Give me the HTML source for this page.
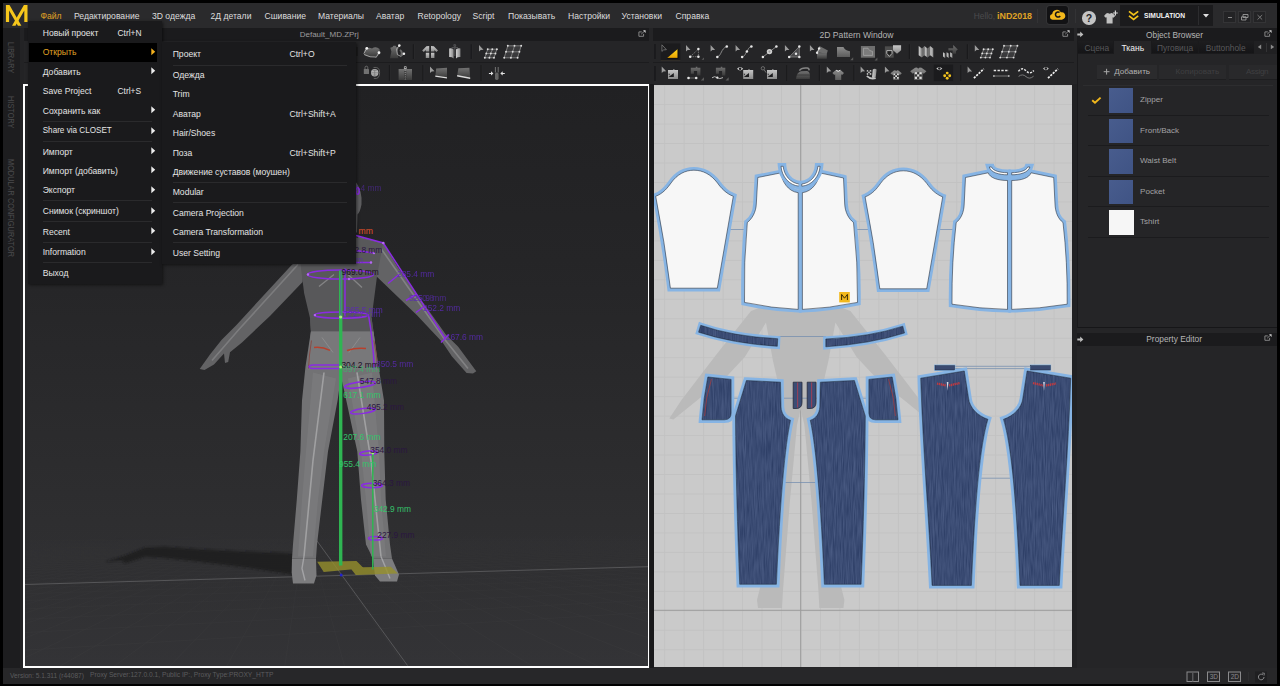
<!DOCTYPE html>
<html lang="ru"><head><meta charset="utf-8"><title>Marvelous Designer</title>
<style>
html,body{margin:0;padding:0;background:#000;}
body{width:1280px;height:686px;overflow:hidden;position:relative;font-family:"Liberation Sans",sans-serif;}
#app{position:absolute;left:0;top:0;width:1280px;height:686px;overflow:hidden;background:#000;}
#app div,#app span,#app svg{position:absolute;}
.t{white-space:nowrap;line-height:12px;height:12px;}
</style></head>
<body><div id="app">
<div style="left:3px;top:3px;width:1274px;height:681px;background:#252527;"></div>
<div style="left:3px;top:3px;width:1274px;height:25px;background:#2a2a2c;"></div>
<div style="left:3px;top:28px;width:17px;height:640px;background:#1d1d1f;"></div>
<div style="left:20px;top:28px;width:4px;height:640px;background:#232325;"></div>
<div style="left:24px;top:28px;width:625px;height:13px;background:#1b1b1d;"></div>
<div style="left:653px;top:28px;width:421px;height:13px;background:#1b1b1d;"></div>
<div style="left:1077px;top:28px;width:200px;height:13px;background:#1b1b1d;"></div>
<div style="left:24px;top:41px;width:625px;height:43px;background:#252527;"></div>
<div style="left:653px;top:41px;width:421px;height:43px;background:#252527;"></div>
<div style="left:24px;top:62px;width:625px;height:1px;background:#1c1c1e;"></div>
<div style="left:653px;top:62px;width:421px;height:1px;background:#1c1c1e;"></div>
<div style="left:649.5px;top:84px;width:4.5px;height:584px;background:#18181a;"></div>
<div style="left:1072px;top:84px;width:5px;height:584px;background:#212123;"></div>
<div style="left:3px;top:668px;width:1274px;height:16px;background:#272729;"></div>
<span class="t" style="left:16.6px;top:41.5px;color:#4a4a4c;font-size:7.3px;transform-origin:0 0;transform:rotate(90deg) scale(1,1.12);letter-spacing:0.05px;">LIBRARY</span>
<span class="t" style="left:16.6px;top:96px;color:#4a4a4c;font-size:7.3px;transform-origin:0 0;transform:rotate(90deg) scale(1,1.12);letter-spacing:0.05px;">HISTORY</span>
<span class="t" style="left:16.6px;top:159px;color:#4a4a4c;font-size:7.3px;transform-origin:0 0;transform:rotate(90deg) scale(1,1.12);letter-spacing:0.05px;">MODULAR CONFIGURATOR</span>
<span class="t " style="left:10px;top:669.6px;color:#5c5c5e;font-size:6.6px;">Version: 5.1.311 (r44087)</span>
<span class="t " style="left:90px;top:669.2px;color:#5c5c5e;font-size:6.68px;">Proxy Server:127.0.0.1, Public IP:, Proxy Type:PROXY_HTTP</span>
<span class="t " style="left:299.7px;top:29.0px;color:#9c9c9e;font-size:8.0px;">Default_MD.ZPrj</span>
<svg style="left:638px;top:30px" width="9" height="8" viewBox="0 0 9 8"><path d="M3.8 1.9 H0.9 V6.3 H5.6 V3.9" fill="none" stroke="#8e8e90" stroke-width="0.9"/><path d="M3.2 4.2 L6.6 1" stroke="#8e8e90" stroke-width="0.9"/><path d="M5 0.3 H7.6 V2.9 Z" fill="#d0d0d0"/></svg>
<svg style="left:1062px;top:30px" width="9" height="8" viewBox="0 0 9 8"><path d="M3.8 1.9 H0.9 V6.3 H5.6 V3.9" fill="none" stroke="#8e8e90" stroke-width="0.9"/><path d="M3.2 4.2 L6.6 1" stroke="#8e8e90" stroke-width="0.9"/><path d="M5 0.3 H7.6 V2.9 Z" fill="#d0d0d0"/></svg>
<span class="t " style="left:819.5px;top:29.0px;color:#b4b4b4;font-size:8.6px;">2D Pattern Window</span>
<div style="left:23px;top:84px;width:626.3px;height:583.7px;background:#fff;"></div>
<svg style="left:25px;top:85.5px" width="623.2" height="580.7" viewBox="25 85.5 623.2 580.7">
<defs>
<linearGradient id="bg3" x1="0" y1="0" x2="0" y2="1"><stop offset="0" stop-color="#212123"/><stop offset="0.3" stop-color="#252527"/><stop offset="0.55" stop-color="#2a2a2c"/><stop offset="0.75" stop-color="#2e2e30"/><stop offset="1" stop-color="#323235"/></linearGradient>
<linearGradient id="leg" x1="0" y1="0" x2="1" y2="0"><stop offset="0" stop-color="#8a8a8a"/><stop offset="0.5" stop-color="#6c6c6e"/><stop offset="1" stop-color="#858587"/></linearGradient>
</defs>
<rect x="25" y="85.5" width="623.2" height="580.7" fill="url(#bg3)"/>
<defs><linearGradient id="flr" x1="0" y1="0" x2="0" y2="1"><stop offset="0" stop-color="#2f2f31" stop-opacity="0"/><stop offset="0.35" stop-color="#303032" stop-opacity="0.5"/><stop offset="1" stop-color="#343437" stop-opacity="0.8"/></linearGradient><filter id="blur2" x="-10%" y="-30%" width="120%" height="160%"><feGaussianBlur stdDeviation="1.0"/></filter><linearGradient id="fmg" x1="0" y1="0" x2="0" y2="1"><stop offset="0" stop-color="#000"/><stop offset="0.3" stop-color="#777"/><stop offset="1" stop-color="#fff"/></linearGradient><mask id="flm" maskUnits="userSpaceOnUse" x="25" y="528" width="623" height="140"><rect x="25" y="528" width="623" height="140" fill="url(#fmg)"/></mask></defs>
<rect x="25" y="522" width="623" height="145" fill="url(#flr)"/>
<path d="M206.6 533.9 L-1299.3 670 M209.1 533.9 L-1270.5 670 M211.7 533.8 L-1241.2 670 M214.3 533.7 L-1211.3 670 M216.9 533.6 L-1181.0 670 M219.5 533.6 L-1150.2 670 M222.0 533.5 L-1118.8 670 M224.6 533.4 L-1086.8 670 M227.2 533.3 L-1054.3 670 M229.8 533.3 L-1021.2 670 M232.4 533.2 L-987.6 670 M234.9 533.1 L-953.3 670 M237.5 533.1 L-918.4 670 M240.1 533.0 L-882.8 670 M242.7 532.9 L-846.6 670 M245.3 532.8 L-809.7 670 M247.8 532.8 L-772.1 670 M250.4 532.7 L-733.7 670 M253.0 532.6 L-694.7 670 M255.6 532.5 L-654.8 670 M258.2 532.5 L-614.2 670 M260.7 532.4 L-572.7 670 M263.3 532.3 L-530.5 670 M265.9 532.2 L-487.3 670 M268.5 532.2 L-443.3 670 M271.1 532.1 L-398.4 670 M273.6 532.0 L-352.5 670 M276.2 531.9 L-305.6 670 M278.8 531.9 L-257.8 670 M281.4 531.8 L-208.8 670 M284.0 531.7 L-158.9 670 M286.5 531.7 L-107.8 670 M289.1 531.6 L-55.6 670 M291.7 531.5 L-2.1 670 M294.3 531.4 L52.5 670 M296.9 531.4 L108.4 670 M299.4 531.3 L165.6 670 M302.0 531.2 L224.2 670 M304.6 531.1 L284.2 670 M307.2 531.1 L345.7 670 M309.8 531.0 L408.7 670 M312.3 530.9 L473.2 670 M314.9 530.8 L539.4 670 M317.5 530.8 L607.2 670 M320.1 530.7 L676.9 670 M322.7 530.6 L748.3 670 M325.2 530.5 L821.7 670 M327.8 530.5 L897.0 670 M330.4 530.4 L974.4 670 M333.0 530.3 L1053.9 670 M335.6 530.3 L1135.7 670 M338.1 530.2 L1219.8 670 M340.7 530.1 L1306.4 670 M343.3 530.0 L1395.4 670 M345.9 530.0 L1487.2 670 M348.5 529.9 L1581.7 670 M351.0 529.8 L1679.1 670 M353.6 529.7 L1779.5 670 M356.2 529.7 L1883.1 670 M358.8 529.6 L1990.1 670 M361.4 529.5 L2100.6 670 M363.9 529.4 L2214.7 670 M366.5 529.4 L2332.7 670 M369.1 529.3 L2454.7 670 M371.7 529.2 L2581.0 670 M374.3 529.1 L2711.8 670 M376.8 529.1 L2847.4 670 M379.4 529.0 L2988.0 670 M382.0 528.9 L3133.8 670 M384.6 528.8 L3285.3 670 M387.2 528.8 L3442.6 670 M389.7 528.7 L3606.3 670 M392.3 528.6 L3776.6 670 M394.9 528.6 L3954.0 670 M397.5 528.5 L4138.9 670 M400.1 528.4 L4331.8 670 M402.6 528.3 L4533.2 670 M405.2 528.3 L4743.8 670 M407.8 528.2 L4964.2 670 M410.4 528.1 L5195.0 670 M413.0 528.0 L5437.0 670 M415.5 528.0 L5691.1 670 M418.1 527.9 L5958.1 670 M420.7 527.8 L6239.2 670 M423.3 527.7 L6535.4 670 M425.9 527.7 L6847.9 670 M428.4 527.6 L7178.3 670 M431.0 527.5 L7528.0 670 M433.6 527.4 L7898.8 670 M436.2 527.4 L8292.6 670 M438.8 527.3 L8711.8 670 M441.3 527.2 L9158.7 670 M443.9 527.2 L9636.4 670 M446.5 527.1 L10147.9 670 M449.1 527.0 L10697.1 670 M451.7 526.9 L11288.4 670 M454.2 526.9 L11926.6 670 M456.8 526.8 L12617.7 670 M459.4 526.7 L13368.5 670 M462.0 526.6 L14187.1 670 M20 650.0 L650 611.8 M20 632.3 L650 599.6 M20 619.0 L650 590.3 M20 608.6 L650 583.1 M20 600.3 L650 577.3 M20 593.5 L650 572.6 M20 587.8 L650 568.7 M20 583.0 L650 565.3 M20 578.9 L650 562.5 M20 575.3 L650 560.0 M20 572.2 L650 557.8 M20 569.4 L650 555.9 M20 567.0 L650 554.2 M20 564.8 L650 552.6 M20 562.8 L650 551.3 M20 561.0 L650 550.0 M20 559.4 L650 548.9 M20 557.9 L650 547.8 M20 556.5 L650 546.9 M20 555.2 L650 546.0 M20 554.1 L650 545.2 M20 553.0 L650 544.5 M20 552.0 L650 543.8 M20 551.1 L650 543.1 M20 550.2 L650 542.5 M20 549.4 L650 542.0 M20 548.6 L650 541.4 M20 547.9 L650 540.9 M20 547.3 L650 540.5 M20 546.6 L650 540.0 M20 546.0 L650 539.6 M20 545.5 L650 539.2 M20 544.9 L650 538.8 M20 544.4 L650 538.5 M20 543.9 L650 538.2 M20 543.5 L650 537.8 M20 543.0 L650 537.5 M20 542.6 L650 537.2 M20 542.2 L650 537.0 M20 541.8 L650 536.7 M20 541.5 L650 536.4 M20 541.1 L650 536.2 M20 540.8 L650 536.0 M20 540.5 L650 535.7 M20 540.1 L650 535.5 M20 539.8 L650 535.3 M20 539.6 L650 535.1" stroke="#414143" stroke-width="0.5" fill="none" opacity="0.6" mask="url(#flm)"/>
<path d="M25 584 L648 566.2" stroke="#5a5a5c" stroke-width="0.9" fill="none"/>
<path d="M316 539 L407.5 665" stroke="#5a5a5c" stroke-width="0.9" fill="none"/>
<path d="M105,561.3 L125,555 L145,547 L165,546.3 L200,548.8 L250,551.3 L296,553 L300,574 L290,573.8 L250,567.5 L200,561.3 L165,557.5 L145,556.3 L125,563 L122,560 Z" fill="#1d1d1f" opacity="0.8" filter="url(#blur2)"/>
<ellipse cx="341" cy="208" rx="14" ry="18.5" fill="#626264"/>
<path d="M332,222 L350,222 L352,238 L330,238 Z" fill="#5c5c5e"/>
<path d="M355.5,181 Q362.5,190 361.5,204 Q360,212 357.5,214 L357,232 L355.5,232 Z" fill="#5e5e60"/>
<path d="M305,254 L291.7,264.5 L262.6,296 L236,325 L221.5,339.6 L210,354 L199.7,368.6 L204.5,369.6 L214,364 L224,353 L225,362.6 L228.2,361.5 L230,351.7 L242,342 L270,315.4 L302.6,281.5 Z" fill="#636365"/>
<path d="M298,264 L238,330 L212,360" stroke="#8e8e90" stroke-width="1.6" fill="none" opacity="0.6"/>
<path d="M357.6,236 L383.3,242.5 L397.7,266.6 L445.8,333.9 L458,346 L476.3,370.8 L473,373 L466.6,372.4 L452,356 L442.6,342 L417,314.7 L376.9,276.2 Z" fill="#636365"/>
<path d="M381,248 L444,338 L468,368" stroke="#8e8e90" stroke-width="1.6" fill="none" opacity="0.7"/>
<path d="M330,236 L352,236 L383,243 L377,276 L371.6,317.6 L373.5,331 L310.9,331 L310,317.6 L304.2,293 L301,268 L300,254 Z" fill="#58585a"/>
<path d="M310,317.6 L371.6,317.6 L373.5,331 L310.9,331 Z" fill="#565658"/>
<path d="M319,286 L334,274 M362,287 L348,274" stroke="#8e8e90" stroke-width="1.3" fill="none" opacity="0.8"/>
<path d="M310.9,331 L373.5,331 L378.5,366 L384,400 L384.3,451 L385.7,499 L390,544 L392,558 L373,558 L366,544 L361,499 L357.3,451 L346.3,400 L341,376 L337.6,400 L328,451 L322.3,499 L317,544 L316,558 L292,558 L293,544 L296.8,499 L300.4,451 L302,400 L305.5,366 Z" fill="#727274"/>
<path d="M310.9,331 L373.5,331 L378.2,369 L307,369 Z" fill="#78787a"/>
<path d="M313,372 L336,378 L324,451 L318,499 L313,556 L298,556 L302,499 L306,451 Z M348,378 L372,372 L379,451 L381,499 L386,556 L371,556 L366,499 L361,451 Z" fill="#808082" opacity="0.55"/>
<path d="M324,372 L313,460 L304,556 M357,372 L371,460 L381,556" stroke="#b0b0b2" stroke-width="1.6" fill="none" opacity="0.7"/>
<path d="M341,331 V376 M322,337 L333,352 M360,337 L349,352" stroke="#909092" stroke-width="1" fill="none" opacity="0.8"/>
<path d="M314,347 Q322,346 330,350 M347,350 Q356,347 366,348" stroke="#b8402c" stroke-width="1.4" fill="none"/>
<path d="M311.5,340 Q309,355 308.5,368 M374,340 Q377,355 377.5,368" stroke="#8a3a30" stroke-width="0.7" fill="none"/>
<path d="M292,558 L291.7,572 L293,583 L314,583 L316.5,575 L316,558 Z" fill="#7c7c7e"/>
<path d="M373,558 L375,575 L380,581 L397,581 L399,574 L392,558 Z" fill="#7c7c7e"/>
<path d="M304,556 L302,568 L305,580 M381,556 L386,568 L390,578" stroke="#b4b4b6" stroke-width="1.4" opacity="0.7" fill="none"/>
<path d="M317.2,561.2 L356.5,560.5 L363.8,567.8 L323.7,571.4 Z M350,567 L390.8,566.3 L398,573 L355.8,574.4 Z" fill="#96902c" opacity="0.8"/>
<g fill="none" stroke="#8a2be2" stroke-width="1.5"><ellipse cx="340.5" cy="274" rx="33" ry="4.6"/><ellipse cx="341.2" cy="314.6" rx="27" ry="3.2"/><path d="M339,368 H312 Q306,366.3 312,364.6 H339"/><ellipse cx="360" cy="384.3" rx="15.5" ry="2.8" transform="rotate(-8 360 384.3)"/><ellipse cx="363" cy="410.5" rx="12.5" ry="2.4" transform="rotate(-8 363 410.5)"/><ellipse cx="368.5" cy="452.6" rx="8.8" ry="2" transform="rotate(-5 368.5 452.6)"/><ellipse cx="372" cy="485" rx="10.5" ry="2.2"/><ellipse cx="375.5" cy="537.8" rx="7" ry="1.8"/><ellipse cx="357.6" cy="190.5" rx="1.6" ry="3.2"/><path d="M356,235 L383.3,242.5 L445.8,338.7"/><path d="M356,250 L374,252.5 M356,262 L372,262"/><path d="M388,283 L399,274 M406,300 L416,294 M416,312 L424,306 M441,342 L449,334"/><path d="M345,268 V316"/><path d="M368.7,315.7 Q373,340 374.4,368.9"/></g>
<g fill="#b56af0"><circle cx="383.3" cy="242.5" r="1.3"/><circle cx="374" cy="252.5" r="1.2"/><circle cx="371" cy="262" r="1.2"/><circle cx="308" cy="274" r="1.2"/><circle cx="349" cy="278.5" r="1.2"/><circle cx="315" cy="314.6" r="1.2"/></g>
<path d="M340.7 270 V565" stroke="#2fb552" stroke-width="3.4" fill="none"/>
<path d="M340.7 270 V316" stroke="#6a3fc0" stroke-width="1.4" fill="none" opacity="0.55"/>
<path d="M372.8 452.8 V569" stroke="#2fb552" stroke-width="1.5" fill="none"/>
<g fill="#a8f07a"><circle cx="340.7" cy="316.5" r="1.6"/><circle cx="340.7" cy="366.5" r="1.5"/><circle cx="372.8" cy="452.8" r="1.3"/></g>
<circle cx="341.2" cy="574.4" r="1.5" fill="#2222d0"/>
<text x="358.6" y="234" fill="#e0502a" font-size="8.6" font-family="Liberation Sans, sans-serif" opacity="1">mm</text>
<text x="353.5" y="190.3" fill="#5a2ab4" font-size="8.4" font-family="Liberation Sans, sans-serif" opacity="0.55">3.4 mm</text>
<text x="354.4" y="253" fill="#2a1640" font-size="8.4" font-family="Liberation Sans, sans-serif" opacity="1">2.8 mm</text>
<text x="356" y="262.5" fill="#5a2ab4" font-size="8.4" font-family="Liberation Sans, sans-serif" opacity="0.7">m</text>
<text x="341.6" y="274.6" fill="#1a1024" font-size="8.4" font-family="Liberation Sans, sans-serif" opacity="1">969.0 mm</text>
<text x="397" y="276.6" fill="#5a2ab4" font-size="8.4" font-family="Liberation Sans, sans-serif" opacity="0.85">285.4 mm</text>
<text x="409" y="300.5" fill="#5a2ab4" font-size="8.4" font-family="Liberation Sans, sans-serif" opacity="0.7">525.9 mm</text>
<text x="413" y="300.9" fill="#5a2ab4" font-size="8.4" font-family="Liberation Sans, sans-serif" opacity="0.6">250.8</text>
<text x="423" y="311" fill="#5a2ab4" font-size="8.4" font-family="Liberation Sans, sans-serif" opacity="0.85">252.2 mm</text>
<text x="445.8" y="339.5" fill="#5a2ab4" font-size="8.4" font-family="Liberation Sans, sans-serif" opacity="0.85">167.6 mm</text>
<text x="345.5" y="312.6" fill="#5a2ab4" font-size="8.4" font-family="Liberation Sans, sans-serif" opacity="0.9">365.5 mm</text>
<text x="343" y="316.6" fill="#5a2ab4" font-size="8.4" font-family="Liberation Sans, sans-serif" opacity="0.8">722.7 mm</text>
<text x="341.4" y="367.2" fill="#1a1024" font-size="8.4" font-family="Liberation Sans, sans-serif" opacity="1">304.2 mm</text>
<text x="376" y="367" fill="#5a2ab4" font-size="8.4" font-family="Liberation Sans, sans-serif" opacity="0.85">850.5 mm</text>
<text x="343" y="371.2" fill="#35c26a" font-size="8.4" font-family="Liberation Sans, sans-serif" opacity="0.7">897.4 mm</text>
<text x="359.8" y="383.2" fill="#2a1640" font-size="8.4" font-family="Liberation Sans, sans-serif" opacity="1">547.8 mm</text>
<text x="343.3" y="398" fill="#35c26a" font-size="8.4" font-family="Liberation Sans, sans-serif" opacity="1">617.1 mm</text>
<text x="366.8" y="409.2" fill="#2a1640" font-size="8.4" font-family="Liberation Sans, sans-serif" opacity="1">495.2 mm</text>
<text x="343.3" y="440" fill="#35c26a" font-size="8.4" font-family="Liberation Sans, sans-serif" opacity="1">207.6 mm</text>
<text x="370.3" y="452.2" fill="#2a1640" font-size="8.4" font-family="Liberation Sans, sans-serif" opacity="1">354.0 mm</text>
<text x="339" y="466.2" fill="#35c26a" font-size="8.4" font-family="Liberation Sans, sans-serif" opacity="1">955.4 mm</text>
<text x="372.7" y="485.4" fill="#2a1640" font-size="8.4" font-family="Liberation Sans, sans-serif" opacity="1">364.3 mm</text>
<text x="373.8" y="511.8" fill="#35c26a" font-size="8.4" font-family="Liberation Sans, sans-serif" opacity="1">342.9 mm</text>
<text x="377.3" y="538" fill="#2a1640" font-size="8.4" font-family="Liberation Sans, sans-serif" opacity="1">227.9 mm</text>
</svg>
<svg style="left:654px;top:85px" width="418" height="582" viewBox="654 85 418 582">
<defs>
<filter id="denimf" x="0" y="0" width="100%" height="100%" color-interpolation-filters="sRGB">
<feTurbulence type="fractalNoise" baseFrequency="1.1 0.05" numOctaves="2" seed="7" result="n"/>
<feColorMatrix in="n" type="matrix" values="1 0 0 0 0  1 0 0 0 0  1 0 0 0 0  0 0 0 0 1" result="g"/>
<feComposite in="SourceGraphic" in2="g" operator="arithmetic" k1="0" k2="1" k3="0.16" k4="-0.08" result="c"/>
<feComposite in="c" in2="SourceGraphic" operator="in"/>
</filter>
<pattern id="grid" x="664.2" y="104.1" width="19.47" height="19.47" patternUnits="userSpaceOnUse">
<path d="M0.5 0 V19.47 M0 0.5 H19.47" stroke="#c2c2c2" stroke-width="1" fill="none"/>
</pattern>
</defs>
<rect x="654" y="85" width="418" height="582" fill="#cacaca"/>
<rect x="654" y="85" width="418" height="582" fill="url(#grid)"/>
<path d="M800.7 85 V667 M654 610.3 H1072" stroke="#9c9c9c" stroke-width="1" fill="none"/>
<path d="M785,298 L751,311 L716,355 L681.5,400 L669.3,418.4 L673.4,419.4 L700,398 L722,381.6 L744.8,357 L766,322.4 L773,361 L777.4,380 L771,420 L768,500 L762,580 L757,600 L758,608 L782,608 L783,590 L790,500 L797,425 L800.7,409 L804.4,425 L811.4,500 L818.4,590 L819.4,608 L843.4,608 L844.4,600 L839.4,580 L833.4,500 L830.4,420 L824.0,380 L828.4,361 L835.4,322.4 L856.6,357 L879.4,381.6 L901.4,398 L928.0,419.4 L932.1,418.4 L919.9,400 L885.4,355 L850.4,311 L816.4,298 Z" fill="#bababa"/>
<path d="M726 229.5 H747.5 M853 229.5 H871 M934 229.5 H956.5 M778 336.5 H826 M781 398.2 H820 M731 398.2 H741 M860 398.2 H869 M782 482.5 H820 M975.5 478.2 H1016 M954.6 366.3 H1030.7 M954.6 368.6 H1030.7" stroke="#6f89ad" stroke-width="0.7" fill="none"/>
<path d="M655.7,196.3 C663,193.5 667.5,188 671,183 C677,174.5 685,170.2 693.9,170.2 C703,170.2 711,174.5 717.5,183 C721,188 726,193.5 733.3,196.3 L717.3,288.2 L670.4,288.2 Q664.7,242 655.7,196.3 Z" fill="#86b4e4" stroke="#86b4e4" stroke-width="6.4" stroke-linejoin="miter" stroke-miterlimit="3"/><path d="M655.7,196.3 C663,193.5 667.5,188 671,183 C677,174.5 685,170.2 693.9,170.2 C703,170.2 711,174.5 717.5,183 C721,188 726,193.5 733.3,196.3 L717.3,288.2 L670.4,288.2 Q664.7,242 655.7,196.3 Z" fill="#f7f7f7"/><path d="M655.7,196.3 C663,193.5 667.5,188 671,183 C677,174.5 685,170.2 693.9,170.2 C703,170.2 711,174.5 717.5,183 C721,188 726,193.5 733.3,196.3 L717.3,288.2 L670.4,288.2 Q664.7,242 655.7,196.3 Z" fill="none" stroke="#1c2230" stroke-width="0.55"/>
<g transform="translate(209.4,0.6)"><path d="M655.7,196.3 C663,193.5 667.5,188 671,183 C677,174.5 685,170.2 693.9,170.2 C703,170.2 711,174.5 717.5,183 C721,188 726,193.5 733.3,196.3 L717.3,288.2 L670.4,288.2 Q664.7,242 655.7,196.3 Z" fill="#86b4e4" stroke="#86b4e4" stroke-width="6.4" stroke-linejoin="miter" stroke-miterlimit="3"/><path d="M655.7,196.3 C663,193.5 667.5,188 671,183 C677,174.5 685,170.2 693.9,170.2 C703,170.2 711,174.5 717.5,183 C721,188 726,193.5 733.3,196.3 L717.3,288.2 L670.4,288.2 Q664.7,242 655.7,196.3 Z" fill="#f7f7f7"/><path d="M655.7,196.3 C663,193.5 667.5,188 671,183 C677,174.5 685,170.2 693.9,170.2 C703,170.2 711,174.5 717.5,183 C721,188 726,193.5 733.3,196.3 L717.3,288.2 L670.4,288.2 Q664.7,242 655.7,196.3 Z" fill="none" stroke="#1c2230" stroke-width="0.55"/></g>
<path d="M757.8,177.5 L781.2,172.8 C781.5,181 788,191.5 798.2,192.7 L798.2,309.4 Q772,308.3 744.5,302.4 Q743.6,262 747.3,222.5 C752,219 756,212 756.3,204 Z" fill="#86b4e4" stroke="#86b4e4" stroke-width="6.4" stroke-linejoin="miter" stroke-miterlimit="3"/><path d="M757.8,177.5 L781.2,172.8 C781.5,181 788,191.5 798.2,192.7 L798.2,309.4 Q772,308.3 744.5,302.4 Q743.6,262 747.3,222.5 C752,219 756,212 756.3,204 Z" fill="#f7f7f7"/><path d="M757.8,177.5 L781.2,172.8 C781.5,181 788,191.5 798.2,192.7 L798.2,309.4 Q772,308.3 744.5,302.4 Q743.6,262 747.3,222.5 C752,219 756,212 756.3,204 Z" fill="none" stroke="#1c2230" stroke-width="0.55"/>
<path d="M843.5,178 L819.4,172.8 C819.1,181 812.6,191.5 802.4,192.7 L802.4,309.4 Q829,308.3 857.5,302.4 Q858,262 853.5,222.5 C848.8,219 845,212 844.7,204 Z" fill="#86b4e4" stroke="#86b4e4" stroke-width="6.4" stroke-linejoin="miter" stroke-miterlimit="3"/><path d="M843.5,178 L819.4,172.8 C819.1,181 812.6,191.5 802.4,192.7 L802.4,309.4 Q829,308.3 857.5,302.4 Q858,262 853.5,222.5 C848.8,219 845,212 844.7,204 Z" fill="#f7f7f7"/><path d="M843.5,178 L819.4,172.8 C819.1,181 812.6,191.5 802.4,192.7 L802.4,309.4 Q829,308.3 857.5,302.4 Q858,262 853.5,222.5 C848.8,219 845,212 844.7,204 Z" fill="none" stroke="#1c2230" stroke-width="0.55"/>
<path d="M781.0,166.3 C781.8,176.4 789,185.4 799.3,186.2 L799.3,184.0 C790.4,183.2 783.9,175 783.2,166.3 Z" fill="#86b4e4" stroke="#86b4e4" stroke-width="6.4" stroke-linejoin="miter" stroke-miterlimit="3"/><path d="M781.0,166.3 C781.8,176.4 789,185.4 799.3,186.2 L799.3,184.0 C790.4,183.2 783.9,175 783.2,166.3 Z" fill="#ffffff"/><path d="M781.0,166.3 C781.8,176.4 789,185.4 799.3,186.2 L799.3,184.0 C790.4,183.2 783.9,175 783.2,166.3 Z" fill="none" stroke="#1c2230" stroke-width="0.55"/>
<path d="M 820.1,166.3 C 819.3,176.4 812.1,185.4 801.8,186.2 L 801.8,184.0 C 810.7,183.2 817.2,175 817.9,166.3 Z" fill="#86b4e4" stroke="#86b4e4" stroke-width="6.4" stroke-linejoin="miter" stroke-miterlimit="3"/><path d="M 820.1,166.3 C 819.3,176.4 812.1,185.4 801.8,186.2 L 801.8,184.0 C 810.7,183.2 817.2,175 817.9,166.3 Z" fill="#ffffff"/><path d="M 820.1,166.3 C 819.3,176.4 812.1,185.4 801.8,186.2 L 801.8,184.0 C 810.7,183.2 817.2,175 817.9,166.3 Z" fill="none" stroke="#1c2230" stroke-width="0.55"/>
<rect x="839.2" y="292" width="10.6" height="10.4" fill="#f2b81c"/>
<path d="M841.6 300 V294.4 L844.5 298.2 L847.4 294.4 V300" fill="none" stroke="#3a2c05" stroke-width="1"/>
<path d="M965.5,177.5 L988.2,172.8 C990,178 998,180.5 1007.5,180.5 L1007.5,309.4 Q980,308.8 952,304.2 Q951.6,262 956.2,222.5 C961,219 964,212 964.2,204 Z" fill="#86b4e4" stroke="#86b4e4" stroke-width="6.4" stroke-linejoin="miter" stroke-miterlimit="3"/><path d="M965.5,177.5 L988.2,172.8 C990,178 998,180.5 1007.5,180.5 L1007.5,309.4 Q980,308.8 952,304.2 Q951.6,262 956.2,222.5 C961,219 964,212 964.2,204 Z" fill="#f7f7f7"/><path d="M965.5,177.5 L988.2,172.8 C990,178 998,180.5 1007.5,180.5 L1007.5,309.4 Q980,308.8 952,304.2 Q951.6,262 956.2,222.5 C961,219 964,212 964.2,204 Z" fill="none" stroke="#1c2230" stroke-width="0.55"/>
<path d="M 1053.7,177.5 L 1031.0,172.8 C 1029.2,178 1021.2,180.5 1011.7,180.5 L 1011.7,309.4 Q 1039.2,308.8 1067.2,304.2 Q 1067.6,262 1063.0,222.5 C 1058.2,219 1055.2,212 1055.0,204 Z" fill="#86b4e4" stroke="#86b4e4" stroke-width="6.4" stroke-linejoin="miter" stroke-miterlimit="3"/><path d="M 1053.7,177.5 L 1031.0,172.8 C 1029.2,178 1021.2,180.5 1011.7,180.5 L 1011.7,309.4 Q 1039.2,308.8 1067.2,304.2 Q 1067.6,262 1063.0,222.5 C 1058.2,219 1055.2,212 1055.0,204 Z" fill="#f7f7f7"/><path d="M 1053.7,177.5 L 1031.0,172.8 C 1029.2,178 1021.2,180.5 1011.7,180.5 L 1011.7,309.4 Q 1039.2,308.8 1067.2,304.2 Q 1067.6,262 1063.0,222.5 C 1058.2,219 1055.2,212 1055.0,204 Z" fill="none" stroke="#1c2230" stroke-width="0.55"/>
<path d="M989.3,167 C990.8,172.4 999,174.8 1007.5,174.8 L1007.5,172.7 C1000,172.7 992.9,170.8 991.5,167 Z" fill="#86b4e4" stroke="#86b4e4" stroke-width="6.4" stroke-linejoin="miter" stroke-miterlimit="3"/><path d="M989.3,167 C990.8,172.4 999,174.8 1007.5,174.8 L1007.5,172.7 C1000,172.7 992.9,170.8 991.5,167 Z" fill="#ffffff"/><path d="M989.3,167 C990.8,172.4 999,174.8 1007.5,174.8 L1007.5,172.7 C1000,172.7 992.9,170.8 991.5,167 Z" fill="none" stroke="#1c2230" stroke-width="0.55"/>
<path d="M 1029.9,167 C 1028.4,172.4 1020.2,174.8 1011.7,174.8 L 1011.7,172.7 C 1019.2,172.7 1026.3,170.8 1027.7,167 Z" fill="#86b4e4" stroke="#86b4e4" stroke-width="6.4" stroke-linejoin="miter" stroke-miterlimit="3"/><path d="M 1029.9,167 C 1028.4,172.4 1020.2,174.8 1011.7,174.8 L 1011.7,172.7 C 1019.2,172.7 1026.3,170.8 1027.7,167 Z" fill="#ffffff"/><path d="M 1029.9,167 C 1028.4,172.4 1020.2,174.8 1011.7,174.8 L 1011.7,172.7 C 1019.2,172.7 1026.3,170.8 1027.7,167 Z" fill="none" stroke="#1c2230" stroke-width="0.55"/>
<path d="M700.7,325.3 Q733,336.5 777.7,338.7 L777.3,346.3 Q733,343.5 698.6,332.2 Z" fill="#86b4e4" stroke="#86b4e4" stroke-width="5.4" stroke-linejoin="miter" stroke-miterlimit="3"/><path d="M700.7,325.3 Q733,336.5 777.7,338.7 L777.3,346.3 Q733,343.5 698.6,332.2 Z" fill="#3b4c74" filter="url(#denimf)"/><path d="M700.7,325.3 Q733,336.5 777.7,338.7 L777.3,346.3 Q733,343.5 698.6,332.2 Z" fill="none" stroke="#1c2230" stroke-width="0.55"/>
<path d="M902.8,326.2 Q870,337 825.8,339 L825.8,346.8 Q870,344 904.5,333 Z" fill="#86b4e4" stroke="#86b4e4" stroke-width="5.4" stroke-linejoin="miter" stroke-miterlimit="3"/><path d="M902.8,326.2 Q870,337 825.8,339 L825.8,346.8 Q870,344 904.5,333 Z" fill="#3b4c74" filter="url(#denimf)"/><path d="M902.8,326.2 Q870,337 825.8,339 L825.8,346.8 Q870,344 904.5,333 Z" fill="none" stroke="#1c2230" stroke-width="0.55"/>
<path d="M707.8,377 L731.1,379.4 L731.1,413 Q731.1,419.8 724.3,419.8 L702,419.8 Q703.5,398 707.8,377 Z" fill="#86b4e4" stroke="#86b4e4" stroke-width="6.4" stroke-linejoin="miter" stroke-miterlimit="3"/><path d="M707.8,377 L731.1,379.4 L731.1,413 Q731.1,419.8 724.3,419.8 L702,419.8 Q703.5,398 707.8,377 Z" fill="#3b4c74" filter="url(#denimf)"/><path d="M707.8,377 L731.1,379.4 L731.1,413 Q731.1,419.8 724.3,419.8 L702,419.8 Q703.5,398 707.8,377 Z" fill="none" stroke="#1c2230" stroke-width="0.55"/>
<path d="M 892.2,377 L 868.9,379.4 L 868.9,413 Q 868.9,419.8 875.7,419.8 L 898.0,419.8 Q 896.5,398 892.2,377 Z" fill="#86b4e4" stroke="#86b4e4" stroke-width="6.4" stroke-linejoin="miter" stroke-miterlimit="3"/><path d="M 892.2,377 L 868.9,379.4 L 868.9,413 Q 868.9,419.8 875.7,419.8 L 898.0,419.8 Q 896.5,398 892.2,377 Z" fill="#3b4c74" filter="url(#denimf)"/><path d="M 892.2,377 L 868.9,379.4 L 868.9,413 Q 868.9,419.8 875.7,419.8 L 898.0,419.8 Q 896.5,398 892.2,377 Z" fill="none" stroke="#1c2230" stroke-width="0.55"/>
<path d="M711.5,379 Q705.5,398 704.6,416" stroke="#b03a3a" stroke-width="0.7" fill="none"/>
<path d="M888.5,379 Q894.5,398 895.4,416" stroke="#b03a3a" stroke-width="0.7" fill="none"/>
<path d="M746.4,380.5 L780.5,382.2 L781,407 C781.5,414 785,418.5 790.5,420.3 C785,445 780,500 776.4,584.3 L739.7,584.3 C737.5,530 735.8,470 735.5,416 Z" fill="#86b4e4" stroke="#86b4e4" stroke-width="6.4" stroke-linejoin="miter" stroke-miterlimit="3"/><path d="M746.4,380.5 L780.5,382.2 L781,407 C781.5,414 785,418.5 790.5,420.3 C785,445 780,500 776.4,584.3 L739.7,584.3 C737.5,530 735.8,470 735.5,416 Z" fill="#3b4c74" filter="url(#denimf)"/><path d="M746.4,380.5 L780.5,382.2 L781,407 C781.5,414 785,418.5 790.5,420.3 C785,445 780,500 776.4,584.3 L739.7,584.3 C737.5,530 735.8,470 735.5,416 Z" fill="none" stroke="#1c2230" stroke-width="0.55"/>
<path d="M 854.4,380.5 L 820.3,382.2 L 819.8,407 C 819.3,414 815.8,418.5 810.3,420.3 C 815.8,445 820.8,500 824.4,584.3 L 861.1,584.3 C 863.3,530 865.0,470 865.3,416 Z" fill="#86b4e4" stroke="#86b4e4" stroke-width="6.4" stroke-linejoin="miter" stroke-miterlimit="3"/><path d="M 854.4,380.5 L 820.3,382.2 L 819.8,407 C 819.3,414 815.8,418.5 810.3,420.3 C 815.8,445 820.8,500 824.4,584.3 L 861.1,584.3 C 863.3,530 865.0,470 865.3,416 Z" fill="#3b4c74" filter="url(#denimf)"/><path d="M 854.4,380.5 L 820.3,382.2 L 819.8,407 C 819.3,414 815.8,418.5 810.3,420.3 C 815.8,445 820.8,500 824.4,584.3 L 861.1,584.3 C 863.3,530 865.0,470 865.3,416 Z" fill="none" stroke="#1c2230" stroke-width="0.55"/>
<path d="M793.2,382.2 H802 V402.5 Q802,408.5 796,408.5 H793.2 Z" fill="#3b4c74" stroke="#242a3a" stroke-width="0.8"/>
<path d="M797.6 382.5 V407.5" stroke="#96425a" stroke-width="1.1"/>
<path d="M807.2,382.2 H816 V402.5 Q816,408.5 810,408.5 H807.2 Z" fill="#3b4c74" stroke="#242a3a" stroke-width="0.8"/>
<path d="M811.6 382.5 V407.5" stroke="#96425a" stroke-width="1.1"/>
<path d="M920.7,378.2 L964.3,371 L968.5,398 C969.5,408 978,416 987.9,419.3 C980,445 975,500 971.4,585.4 L932.1,585.4 C929,520 923,450 920.7,378.2 Z" fill="#86b4e4" stroke="#86b4e4" stroke-width="6.4" stroke-linejoin="miter" stroke-miterlimit="3"/><path d="M920.7,378.2 L964.3,371 L968.5,398 C969.5,408 978,416 987.9,419.3 C980,445 975,500 971.4,585.4 L932.1,585.4 C929,520 923,450 920.7,378.2 Z" fill="#3b4c74" filter="url(#denimf)"/><path d="M920.7,378.2 L964.3,371 L968.5,398 C969.5,408 978,416 987.9,419.3 C980,445 975,500 971.4,585.4 L932.1,585.4 C929,520 923,450 920.7,378.2 Z" fill="none" stroke="#1c2230" stroke-width="0.55"/>
<path d="M 1070.7,378.2 L 1027.1,371 L 1022.9,398 C 1021.9,408 1013.4,416 1003.5,419.3 C 1011.4,445 1016.4,500 1020.0,585.4 L 1059.3,585.4 C 1062.4,520 1068.4,450 1070.7,378.2 Z" fill="#86b4e4" stroke="#86b4e4" stroke-width="6.4" stroke-linejoin="miter" stroke-miterlimit="3"/><path d="M 1070.7,378.2 L 1027.1,371 L 1022.9,398 C 1021.9,408 1013.4,416 1003.5,419.3 C 1011.4,445 1016.4,500 1020.0,585.4 L 1059.3,585.4 C 1062.4,520 1068.4,450 1070.7,378.2 Z" fill="#3b4c74" filter="url(#denimf)"/><path d="M 1070.7,378.2 L 1027.1,371 L 1022.9,398 C 1021.9,408 1013.4,416 1003.5,419.3 C 1011.4,445 1016.4,500 1020.0,585.4 L 1059.3,585.4 C 1062.4,520 1068.4,450 1070.7,378.2 Z" fill="none" stroke="#1c2230" stroke-width="0.55"/>
<path d="M946.8,382 L947.6,391 L948.4,382 Z M1043.2,382 L1044,391 L1044.8,382 Z" fill="#d8dde8"/>
<path d="M937,383.5 L946,385.5 M949,385.5 L960,383" stroke="#c23a40" stroke-width="2.3" stroke-dasharray="1.3 0.6" fill="none"/>
<path d="M1033,383 L1043,385.5 M1046,385.5 L1056,383.5" stroke="#c23a40" stroke-width="2.3" stroke-dasharray="1.3 0.6" fill="none"/>
<rect x="934.2" y="364.6" width="21.2" height="6.4" fill="#86b4e4"/><rect x="935" y="365.6" width="19.6" height="4.4" fill="#3a4a70" stroke="#1c2230" stroke-width="0.4"/>
<rect x="1029.9" y="364.6" width="21.2" height="6.4" fill="#86b4e4"/><rect x="1030.7" y="365.6" width="19.6" height="4.4" fill="#3a4a70" stroke="#1c2230" stroke-width="0.4"/>
</svg>
<div style="left:1077px;top:41px;width:200px;height:287px;background:#252527;box-shadow:inset 1px 0 0 #1a1a1c, inset 0 -1px 0 #161618;"></div>
<span class="t " style="left:1146px;top:29.0px;color:#b4b4b4;font-size:8.35px;">Object Browser</span>
<svg style="left:1077px;top:31px" width="7" height="7" viewBox="0 0 7 7"><path d="M0.3 2.4 H3.2 V0.6 L6.4 3.4 L3.2 6.2 V4.4 H0.3 Z" fill="#bdbdbd"/></svg>
<svg style="left:1264px;top:30px" width="9" height="8" viewBox="0 0 9 8"><path d="M3.8 1.9 H0.9 V6.3 H5.6 V3.9" fill="none" stroke="#8e8e90" stroke-width="0.9"/><path d="M3.2 4.2 L6.6 1" stroke="#8e8e90" stroke-width="0.9"/><path d="M5 0.3 H7.6 V2.9 Z" fill="#d0d0d0"/></svg>
<div style="left:1078px;top:41px;width:199px;height:12.5px;background:#1a1a1c;"></div>
<div style="left:1078px;top:41px;width:35px;height:12px;background:#19191b;background-image:linear-gradient(#1d1d1f,#151517);"></div>
<div style="left:1114px;top:41px;width:37px;height:13px;background:#252527;"></div>
<span class="t " style="left:1121.5px;top:41.9px;color:#f0f0f0;font-size:8.5px;">Ткань</span>
<div style="left:1152px;top:41px;width:46px;height:12px;background:#19191b;background-image:linear-gradient(#1d1d1f,#151517);"></div>
<div style="left:1199px;top:41px;width:55px;height:12px;background:#19191b;background-image:linear-gradient(#1d1d1f,#151517);"></div>
<span class="t " style="left:1084.5px;top:41.9px;color:#58585a;font-size:8.35px;">Сцена</span>
<span class="t " style="left:1157px;top:41.9px;color:#58585a;font-size:8.35px;">Пуговица</span>
<span class="t " style="left:1205.7px;top:41.9px;color:#58585a;font-size:8.35px;">Buttonhole</span>
<div style="left:1254px;top:41px;width:23px;height:12.5px;background:#202022;"></div>
<svg style="left:1257px;top:44px" width="5" height="6"><path d="M4.2 0.6 V5.2 L0.8 2.9 Z" fill="#8a8a8a"/></svg>
<svg style="left:1270px;top:44px" width="5" height="6"><path d="M0.8 0.6 V5.2 L4.2 2.9 Z" fill="#8a8a8a"/></svg>
<div style="left:1266px;top:43px;width:1px;height:9px;background:#333335;"></div>
<div style="left:1097px;top:65px;width:59.5px;height:14px;background:#2b2b2d;box-shadow:0 1px 0 #1e1e20;"></div>
<div style="left:1158.5px;top:65px;width:67.5px;height:14px;background:#29292b;box-shadow:0 1px 0 #1e1e20;"></div>
<div style="left:1228.5px;top:65px;width:48.5px;height:14px;background:#29292b;box-shadow:0 1px 0 #1e1e20;"></div>
<svg style="left:1103px;top:68px" width="8" height="8"><path d="M3.6 0.8 V6.6 M0.7 3.7 H6.5" stroke="#a8a8a8" stroke-width="1"/></svg>
<span class="t " style="left:1114.3px;top:66.3px;color:#b0b0b0;font-size:8.1px;">Добавить</span>
<span class="t " style="left:1175.6px;top:66.3px;color:#3f3f41;font-size:8.1px;">Копировать</span>
<span class="t " style="left:1246px;top:66.3px;color:#3f3f41;font-size:8.1px;letter-spacing:-0.35px;">Assign</span>
<div style="left:1083px;top:85px;width:190px;height:1px;background:#2d2d2f;"></div>
<div style="left:1109px;top:88px;width:24.2px;height:24.6px;background:#42578a;background-image:linear-gradient(135deg,rgba(255,255,255,.03),rgba(0,0,0,.04));"></div>
<span class="t " style="left:1140px;top:94.3px;color:#a2a2a4;font-size:8.1px;">Zipper</span>
<div style="left:1088px;top:114.7px;width:181px;height:1px;background:#1b1b1d;"></div>
<div style="left:1109px;top:118.6px;width:24.2px;height:24.6px;background:#42578a;background-image:linear-gradient(135deg,rgba(255,255,255,.03),rgba(0,0,0,.04));"></div>
<span class="t " style="left:1140px;top:124.9px;color:#a2a2a4;font-size:8.1px;">Front/Back</span>
<div style="left:1088px;top:145.29999999999998px;width:181px;height:1px;background:#1b1b1d;"></div>
<div style="left:1109px;top:149px;width:24.2px;height:24.6px;background:#42578a;background-image:linear-gradient(135deg,rgba(255,255,255,.03),rgba(0,0,0,.04));"></div>
<span class="t " style="left:1140px;top:155.3px;color:#a2a2a4;font-size:8.1px;">Waist Belt</span>
<div style="left:1088px;top:175.7px;width:181px;height:1px;background:#1b1b1d;"></div>
<div style="left:1109px;top:179.7px;width:24.2px;height:24.6px;background:#42578a;background-image:linear-gradient(135deg,rgba(255,255,255,.03),rgba(0,0,0,.04));"></div>
<span class="t " style="left:1140px;top:186.0px;color:#a2a2a4;font-size:8.1px;">Pocket</span>
<div style="left:1088px;top:206.39999999999998px;width:181px;height:1px;background:#1b1b1d;"></div>
<div style="left:1109px;top:210px;width:24.5px;height:25px;background:#f6f6f6;"></div>
<span class="t " style="left:1140px;top:216.3px;color:#a2a2a4;font-size:8.1px;">Tshirt</span>
<div style="left:1088px;top:236.7px;width:181px;height:1px;background:#1b1b1d;"></div>
<svg style="left:1091px;top:96px" width="11" height="9" viewBox="0 0 11 9"><path d="M1.2 4.2 L4 6.8 L9.6 1.6" fill="none" stroke="#f2b81c" stroke-width="1.9"/></svg>
<div style="left:1077px;top:333px;width:200px;height:13px;background:#1b1b1d;"></div>
<span class="t " style="left:1146.3px;top:333.3px;color:#b4b4b4;font-size:8.35px;">Property Editor</span>
<svg style="left:1077px;top:335.5px" width="7" height="7" viewBox="0 0 7 7"><path d="M0.3 2.4 H3.2 V0.6 L6.4 3.4 L3.2 6.2 V4.4 H0.3 Z" fill="#bdbdbd"/></svg>
<svg style="left:1264px;top:334px" width="9" height="8" viewBox="0 0 9 8"><path d="M3.8 1.9 H0.9 V6.3 H5.6 V3.9" fill="none" stroke="#8e8e90" stroke-width="0.9"/><path d="M3.2 4.2 L6.6 1" stroke="#8e8e90" stroke-width="0.9"/><path d="M5 0.3 H7.6 V2.9 Z" fill="#d0d0d0"/></svg>
<div style="left:1077px;top:346px;width:200px;height:322px;background:#252527;"></div>
<svg style="left:1186px;top:671px" width="84" height="12" viewBox="0 0 84 12">
<rect x="1" y="1" width="11.5" height="9.5" fill="none" stroke="#8a8a8c" stroke-width="1"/><path d="M6.75 1 V10.5" stroke="#5a5a5c" stroke-width="1.4"/>
<rect x="21.5" y="1" width="12" height="9.5" fill="none" stroke="#8a8a8c" stroke-width="1"/>
<rect x="42.5" y="1" width="12" height="9.5" fill="none" stroke="#8a8a8c" stroke-width="1"/>
<rect x="69" y="0.5" width="12" height="11" fill="#1f1f21"/>
<path d="M78 6 a2.8 2.8 0 1 1 -1.2 -2.3" fill="none" stroke="#8a8a8c" stroke-width="1"/><path d="M76 2 L78.4 2.2 L78 4.6" fill="none" stroke="#8a8a8c" stroke-width="0.9"/>
</svg>
<span class="t " style="left:1209.7px;top:671.0px;color:#8a8a8c;font-size:6.5px;">3D</span>
<span class="t " style="left:1230.7px;top:671.0px;color:#8a8a8c;font-size:6.5px;">2D</span>
<div style="left:1248px;top:672px;width:1px;height:9px;background:#2e2e30;"></div>
<svg style="left:24px;top:41px" width="1050" height="43" viewBox="24 41 1050 43">
<defs>
<linearGradient id="gL" x1="0" y1="0" x2="0" y2="1"><stop offset="0" stop-color="#c8c8c8"/><stop offset="1" stop-color="#8a8a8a"/></linearGradient>
<linearGradient id="gM" x1="0" y1="0" x2="0" y2="1"><stop offset="0" stop-color="#8c8c8c"/><stop offset="1" stop-color="#5c5c5c"/></linearGradient>
<linearGradient id="gD" x1="0" y1="0" x2="0" y2="1"><stop offset="0" stop-color="#727272"/><stop offset="1" stop-color="#3a3a3a"/></linearGradient>
<linearGradient id="gY" x1="0" y1="0" x2="0" y2="1"><stop offset="0" stop-color="#ffd824"/><stop offset="1" stop-color="#eaa400"/></linearGradient>
<linearGradient id="gH" x1="0" y1="0" x2="1" y2="0"><stop offset="0" stop-color="#d2d2d2"/><stop offset="1" stop-color="#8a8a8a"/></linearGradient>
</defs>
<path d="M357 47 V56" stroke="#1a1a1c" stroke-width="1.4"/>
<path d="M364.5,50 Q368,46.5 372,48.5 Q376,46 379.5,49 L379.8,54.5 Q376,57.5 372,56 Q368,58 364,55 Z" fill="url(#gD)"/>
<path d="M366.8,48.3 L363.8,53.6 M379,52.7 L376,57.6 M364.2,54.5 Q370,57.8 376,57" stroke="#bdbdbd" stroke-width="0.8" fill="none"/>
<circle cx="366.8" cy="48.3" r="1.4" fill="#f0f0f0"/><circle cx="379" cy="52.7" r="1.4" fill="#f0f0f0"/>
<path d="M390.3,47.8 L392.6,47 L393.4,45.8 H395.6 L396.4,47 L398.6,47.8 L397.2,51.5 L398.4,58.3 H390 L391.4,51.5 Z" fill="url(#gD)"/>
<path d="M399.3,45.6 L396.6,49 L397.4,54.6 L400.8,56.4 L403.9,53.7" stroke="#b8b8b8" stroke-width="0.8" fill="none"/>
<path d="M400,50 Q403,52 401,56" stroke="#6a6a6a" stroke-width="2" fill="none"/>
<circle cx="399.3" cy="45.6" r="1.3" fill="#f0f0f0"/><circle cx="403.9" cy="53.7" r="1.3" fill="#f0f0f0"/>
<path d="M413.4 44.2 V59" stroke="#1a1a1c" stroke-width="1.2"/><path d="M414.4 44.2 V59" stroke="#2c2c2e" stroke-width="0.6"/>
<path d="M422.2,50.4 L426.4,46.2 L429.2,46 V51.6 H425.8 V50 L423.8,52 Z M438,50.4 L433.8,46.2 L431,46 V51.6 H434.4 V50 L436.4,52 Z" fill="url(#gL)"/>
<path d="M425.8,52.8 H429.2 V58 H425.8 Z M431,52.8 H434.4 V58 H431 Z" fill="url(#gL)"/>
<path d="M449.2,48.4 Q452,47.8 453.6,49.6 V58.4 Q452,56.8 449.2,57 Z" fill="url(#gH)"/><path d="M460.4,48.4 Q457.6,47.8 456,49.6 V58.4 Q457.6,56.8 460.4,57 Z" fill="url(#gH)"/>
<path d="M454.8,45.4 m-0.9,0 a0.9,0.9 0 1,0 1.8,0 a0.9,0.9 0 1,0 -1.8,0 M451.6,47.6 H458 M454.8,46.4 V56" stroke="#4e4e50" stroke-width="1.2" fill="none"/>
<path d="M471.3 44.2 V59" stroke="#1a1a1c" stroke-width="1.2"/><path d="M472.3 44.2 V59" stroke="#2c2c2e" stroke-width="0.6"/>
<path d="M479 44.9 L479 51.5 L480.7 50.0 L483.5 49.8 Z" fill="#9c9c9c"/>
<path d="M487.70 49.20 L496.90 49.20 L494.00 57.80 L484.80 57.80 Z" fill="#3a3a3c"/><path d="M487.70 49.20 L484.80 57.80 M487.70 49.20 L496.90 49.20 M492.30 49.20 L489.40 57.80 M486.25 53.50 L495.45 53.50 M496.90 49.20 L494.00 57.80 M484.80 57.80 L494.00 57.80" stroke="#8a8a8a" stroke-width="0.8" fill="none"/><circle cx="487.7" cy="49.2" r="0.95" fill="#dedede"/><circle cx="486.25" cy="53.5" r="0.95" fill="#dedede"/><circle cx="484.8" cy="57.8" r="0.95" fill="#dedede"/><circle cx="492.3" cy="49.2" r="0.95" fill="#dedede"/><circle cx="490.85" cy="53.5" r="0.95" fill="#dedede"/><circle cx="489.4" cy="57.8" r="0.95" fill="#dedede"/><circle cx="496.9" cy="49.2" r="0.95" fill="#dedede"/><circle cx="495.45" cy="53.5" r="0.95" fill="#dedede"/><circle cx="494.0" cy="57.8" r="0.95" fill="#dedede"/>
<path d="M507.80 45.80 L521.20 45.80 L517.60 57.80 L504.20 57.80 Z" fill="#3a3a3c"/><path d="M507.80 45.80 L504.20 57.80 M507.80 45.80 L521.20 45.80 M514.50 45.80 L510.90 57.80 M506.00 51.80 L519.40 51.80 M521.20 45.80 L517.60 57.80 M504.20 57.80 L517.60 57.80" stroke="#8a8a8a" stroke-width="0.8" fill="none"/><circle cx="507.8" cy="45.8" r="0.95" fill="#dedede"/><circle cx="506.0" cy="51.8" r="0.95" fill="#dedede"/><circle cx="504.2" cy="57.8" r="0.95" fill="#dedede"/><circle cx="514.5" cy="45.8" r="0.95" fill="#dedede"/><circle cx="512.7" cy="51.8" r="0.95" fill="#dedede"/><circle cx="510.9" cy="57.8" r="0.95" fill="#dedede"/><circle cx="521.2" cy="45.8" r="0.95" fill="#dedede"/><circle cx="519.4" cy="51.8" r="0.95" fill="#dedede"/><circle cx="517.6" cy="57.8" r="0.95" fill="#dedede"/>
<rect x="363.8" y="69" width="5.2" height="5" rx="0.5" fill="#727272"/><path d="M365 69 V67.6 a1.4 1.4 0 0 1 2.8 0 V69" stroke="#727272" stroke-width="0.9" fill="none"/>
<path d="M373.5,67.5 Q379.8,66.5 379.6,72.5 Q379.8,79.5 373.8,78.4" stroke="#5e5e5e" stroke-width="1" fill="none"/>
<circle cx="374.7" cy="72.8" r="3.7" fill="#b4b4b4"/><path d="M374.7 69.6 V76 M371.4 72.8 H378 M372.6 70.6 H376.8 M372.6 75 H376.8" stroke="#777" stroke-width="0.7"/>
<path d="M389.5 65 V81" stroke="#1a1a1c" stroke-width="1.2"/><path d="M390.5 65 V81" stroke="#2c2c2e" stroke-width="0.6"/>
<rect x="398.6" y="69" width="13.4" height="11" fill="url(#gD)"/>
<path d="M405.3 69 V80" stroke="#2a2a2a" stroke-width="2.2" stroke-dasharray="1.1 1.1"/><path d="M405.3 69.6 V80" stroke="#9a9a9a" stroke-width="0.8" stroke-dasharray="1.1 1.1"/>
<path d="M403.9,69.6 V67.4 a1.4,1.4 0 0 1 2.8,0 V69.6 Z" fill="#a8a8a8"/><circle cx="405.3" cy="67.4" r="0.6" fill="#2a2a2a"/>
<path d="M422.9 65 V81" stroke="#1a1a1c" stroke-width="1.2"/><path d="M423.9 65 V81" stroke="#2c2c2e" stroke-width="0.6"/>
<path d="M430 66.4 L430 73.0 L431.7 71.5 L434.5 71.30000000000001 Z" fill="#9c9c9c"/>
<path d="M436.2,68.4 L447,67.8 V77.6 L435.4,75.8 Z" fill="url(#gD)"/><path d="M435.4,75.4 L447,77.2 V78.6 L435.2,76.8 Z" fill="#dcdcdc"/>
<path d="M458.4,68.3 L469.4,67.8 L470.2,78.2 L457.2,75.6 Z" fill="url(#gD)"/><path d="M457.2,75 L470.2,77.5 V78.9 L457.1,76.5 Z" fill="#dcdcdc"/>
<path d="M481.1 65 V81" stroke="#1a1a1c" stroke-width="1.2"/><path d="M482.1 65 V81" stroke="#2c2c2e" stroke-width="0.6"/>
<path d="M495.4,67 V72.5 M498.2,67 V72.5" stroke="#7c7c7c" stroke-width="0.9"/><rect x="495" y="72.5" width="3.6" height="7.4" rx="1.6" fill="#646464"/>
<path d="M488.9,72.9 H491 V71.3 L493.4,73.4 L491,75.5 V73.9 H488.9 Z M504.8,72.9 H502.7 V71.3 L500.3,73.4 L502.7,75.5 V73.9 H504.8 Z" fill="#e2e2e2"/>
<path d="M655 44 V59 M655 66 V81" stroke="#18181a" stroke-width="1.4"/>
<rect x="660.7" y="43.5" width="19.7" height="16.5" fill="#1b1b1d"/><path d="M660.7 60.6 H680.4" stroke="#33302a" stroke-width="0.8"/>
<path d="M661.9 44.8 L661.9 51.4 L663.6 49.9 L666.4 49.699999999999996 Z" fill="none" stroke="#7a7a7a" stroke-width="0.8"/>
<path d="M667.2,58 L677.7,58 L677.7,48.9 Z" fill="url(#gY)"/><path d="M667.2,58.3 H678.1 V49" stroke="#0e0e0e" stroke-width="0.8" fill="none"/>
<path d="M686 45 L686 51.6 L687.7 50.1 L690.5 49.9 Z" fill="#9c9c9c"/>
<path d="M698.4,49.1 L690.2,56.7 M698.4,49.1 V56.7 M690.2,56.7 H698.4" stroke="#8e8e8e" stroke-width="0.7" stroke-dasharray="1.6 0.8" fill="none"/>
<circle cx="698.4" cy="49.1" r="1.25" fill="#e6e6e6"/><circle cx="690.2" cy="56.7" r="1.25" fill="#e6e6e6"/><circle cx="698.4" cy="56.7" r="1.25" fill="#e6e6e6"/><path d="M704.0 57.4 V59.8 H701.6 Z" fill="#5a5a5a"/>
<path d="M710.6 45 L710.6 51.6 L712.3000000000001 50.1 L715.1 49.9 Z" fill="#9c9c9c"/>
<path d="M717.3,57 C722,55 720.5,49 726.8,46.5" stroke="#a0a0a0" stroke-width="0.8" fill="none"/>
<circle cx="726.8" cy="46.5" r="1.25" fill="#e6e6e6"/><circle cx="717.3" cy="57" r="1.25" fill="#e6e6e6"/>
<path d="M735.6 45 L735.6 51.6 L737.3000000000001 50.1 L740.1 49.9 Z" fill="#9c9c9c"/>
<path d="M742.1,57 C746,55.5 745,53 746.9,51.6 C748.5,49.5 748,47.5 751.4,46.5" stroke="#a0a0a0" stroke-width="0.8" fill="none"/>
<circle cx="751.4" cy="46.5" r="1.25" fill="#e6e6e6"/><circle cx="746.9" cy="51.6" r="1.25" fill="#e6e6e6"/><circle cx="742.1" cy="57" r="1.25" fill="#e6e6e6"/>
<path d="M762.9,57 L776.4,46.5" stroke="#a0a0a0" stroke-width="0.8"/>
<circle cx="769.5" cy="51.6" r="2.7" fill="#cfcfcf"/><circle cx="769.5" cy="51.6" r="1.1" fill="#9a9a9a"/>
<circle cx="776.4" cy="46.5" r="1.25" fill="#e6e6e6"/><circle cx="762.9" cy="57" r="1.25" fill="#e6e6e6"/>
<path d="M784.9 45 L784.9 51.6 L786.6 50.1 L789.4 49.9 Z" fill="#9c9c9c"/>
<path d="M789.2,57 L799.3,46.5 V57 Z" fill="#4a4a4c" stroke="#8e8e8e" stroke-width="0.7"/>
<circle cx="799.3" cy="46.5" r="1.25" fill="#e6e6e6"/><circle cx="789.2" cy="57" r="1.25" fill="#e6e6e6"/><circle cx="799.3" cy="57" r="1.25" fill="#e6e6e6"/><circle cx="796" cy="53.7" r="1.25" fill="#e6e6e6"/>
<path d="M809.9 45 L809.9 51.6 L811.6 50.1 L814.4 49.9 Z" fill="#9c9c9c"/>
<path d="M819.4,46 L827.9,50.6 L826.8,53.4 L817.4,52.6 Z" fill="#6c6c6c"/><rect x="817" y="53.2" width="9.8" height="5.6" fill="url(#gD)"/>
<path d="M819.1,48.4 L817.1,52.8" stroke="#dcdcdc" stroke-width="0.9"/><circle cx="819.1" cy="48.4" r="1.2" fill="#e6e6e6"/><circle cx="817.1" cy="52.8" r="1.2" fill="#e6e6e6"/>
<path d="M837,47 H843.4 C844.6,49.8 847,50.8 850,51.3 V56.9 H837 Z" fill="url(#gM)"/><path d="M853.2 57.2 V60.2 H850.2 Z" fill="#5a5a5a"/>
<rect x="860.9" y="46" width="14.1" height="11.7" fill="#6e6e6e"/><path d="M863.4,48.2 H868 C868.8,50.2 870.4,51 872.6,51.4 V55.4 H863.4 Z" fill="#7c7c7c" stroke="#a6a6a6" stroke-width="0.8"/><path d="M877.4 57.6 V60.4 H874.6 Z" fill="#5a5a5a"/>
<rect x="884.9" y="46.3" width="8.8" height="11.4" fill="#4c4c4c"/><path d="M886.8,50.6 H892 V53.4 L889.4,56.4 L886.8,53.4 Z" fill="#1e1e1e" stroke="#d0d0d0" stroke-width="0.8"/>
<path d="M893,45.3 H901.1 V50.2 L897,53.8 L893,50.2 Z" fill="url(#gL)"/>
<path d="M909.4 44.2 V59" stroke="#1a1a1c" stroke-width="1.2"/><path d="M910.4 44.2 V59" stroke="#2c2c2e" stroke-width="0.6"/>
<path d="M918.7,46 L921.9000000000001,48.4 V57.6 L918.7,55.2 Z" fill="url(#gH)"/>
<path d="M924.4,46 L927.6,48.4 V57.6 L924.4,55.2 Z" fill="url(#gH)"/>
<path d="M930.1,46 L933.3000000000001,48.4 V57.6 L930.1,55.2 Z" fill="url(#gH)"/>
<path d="M921.9,48.4 L924.4,46 V55.2 L921.9,57.6 Z M927.6,48.4 L930.1,46 V55.2 L927.6,57.6 Z" fill="#6e6e6e"/>
<path d="M943,52.2 L945.2,53.6 V58 L943,56.6 Z" fill="url(#gH)"/>
<path d="M946.6,52.2 L948.8000000000001,53.6 V58 L946.6,56.6 Z" fill="url(#gH)"/>
<path d="M950.2,52.2 L952.4000000000001,53.6 V58 L950.2,56.6 Z" fill="url(#gH)"/>
<path d="M948.4,48.2 H953.2 V45 L957.8,49.4 L956,51 V53.8 H952.6 V50.6 H948.4 Z" fill="url(#gD)"/>
<path d="M967.4 44.2 V59" stroke="#1a1a1c" stroke-width="1.2"/><path d="M968.4 44.2 V59" stroke="#2c2c2e" stroke-width="0.6"/>
<path d="M974.8 45 L974.8 51.6 L976.5 50.1 L979.3 49.9 Z" fill="#9c9c9c"/>
<path d="M983.60 49.20 L992.80 49.20 L990.00 57.60 L980.80 57.60 Z" fill="#3a3a3c"/><path d="M983.60 49.20 L980.80 57.60 M983.60 49.20 L992.80 49.20 M988.20 49.20 L985.40 57.60 M982.20 53.40 L991.40 53.40 M992.80 49.20 L990.00 57.60 M980.80 57.60 L990.00 57.60" stroke="#8a8a8a" stroke-width="0.8" fill="none"/><circle cx="983.6" cy="49.2" r="0.95" fill="#dedede"/><circle cx="982.2" cy="53.4" r="0.95" fill="#dedede"/><circle cx="980.8" cy="57.6" r="0.95" fill="#dedede"/><circle cx="988.2" cy="49.2" r="0.95" fill="#dedede"/><circle cx="986.8" cy="53.4" r="0.95" fill="#dedede"/><circle cx="985.4" cy="57.6" r="0.95" fill="#dedede"/><circle cx="992.8" cy="49.2" r="0.95" fill="#dedede"/><circle cx="991.4" cy="53.4" r="0.95" fill="#dedede"/><circle cx="990.0" cy="57.6" r="0.95" fill="#dedede"/>
<path d="M1004.00 45.80 L1017.40 45.80 L1013.60 57.60 L1000.20 57.60 Z" fill="#3a3a3c"/><path d="M1004.00 45.80 L1000.20 57.60 M1004.00 45.80 L1017.40 45.80 M1010.70 45.80 L1006.90 57.60 M1002.10 51.70 L1015.50 51.70 M1017.40 45.80 L1013.60 57.60 M1000.20 57.60 L1013.60 57.60" stroke="#8a8a8a" stroke-width="0.8" fill="none"/><circle cx="1004.0" cy="45.8" r="0.95" fill="#dedede"/><circle cx="1002.1" cy="51.7" r="0.95" fill="#dedede"/><circle cx="1000.2" cy="57.6" r="0.95" fill="#dedede"/><circle cx="1010.7" cy="45.8" r="0.95" fill="#dedede"/><circle cx="1008.8" cy="51.7" r="0.95" fill="#dedede"/><circle cx="1006.9" cy="57.6" r="0.95" fill="#dedede"/><circle cx="1017.4" cy="45.8" r="0.95" fill="#dedede"/><circle cx="1015.5" cy="51.7" r="0.95" fill="#dedede"/><circle cx="1013.6" cy="57.6" r="0.95" fill="#dedede"/>
<path d="M661.7 66.4 L661.7 73.0 L663.4000000000001 71.5 L666.2 71.30000000000001 Z" fill="#9c9c9c"/>
<path d="M668.00 70.07 L673.00 70.07 L673.00 69.50 L674.60 69.50 L674.60 70.07 L678.00 70.07 L678.00 79.00 L668.00 79.00 Z" fill="url(#gL)"/><path d="M668.60 77.10 L673.80 73.11 V77.10 Z" fill="#1c1c1e"/><path d="M668.40 73.68 H670.00 L669.20 75.39 Z" fill="#2a2a2c"/>
<path d="M690.80 67.66 L695.79 67.66 L695.79 66.80 L697.33 66.80 L697.33 67.66 L700.40 67.66 L700.40 75.40 L697.14 75.40 L697.14 71.10 L693.87 71.10 L693.87 73.68 L690.80 73.68 Z" fill="url(#gD)"/>
<path d="M688.5 78 H696.2" stroke="#7a7a7a" stroke-width="0.8"/><circle cx="688.5" cy="78" r="1.3" fill="#e6e6e6"/><circle cx="696.2" cy="78" r="1.3" fill="#e6e6e6"/><path d="M704.0 77.3 V80.5 H700.8 Z" fill="#5a5a5a"/>
<path d="M715.90 67.66 L720.79 67.66 L720.79 66.80 L722.29 66.80 L722.29 67.66 L725.30 67.66 L725.30 75.40 L722.10 75.40 L722.10 71.10 L718.91 71.10 L718.91 73.68 L715.90 73.68 Z" fill="url(#gD)"/>
<path d="M712,77.8 Q714.5,75.6 717,77.6 T723,77.6" stroke="#b4b4b4" stroke-width="1" fill="none"/><circle cx="717.3" cy="77.7" r="1.1" fill="#e6e6e6"/><path d="M728.7 77.3 V80.5 H725.5 Z" fill="#5a5a5a"/>
<path d="M737 68.8 Q740.1 65.39999999999999 743.2 68.8 Q740.1 72.0 737 68.8 Z" fill="#cfcfcf"/><circle cx="740.1" cy="68.7" r="1.25" fill="#1c1c1e"/>
<path d="M743.20 70.07 L748.20 70.07 L748.20 69.50 L749.80 69.50 L749.80 70.07 L753.20 70.07 L753.20 79.00 L743.20 79.00 Z" fill="url(#gL)"/><path d="M743.80 77.10 L749.00 73.11 V77.10 Z" fill="#1c1c1e"/><path d="M743.60 73.68 H745.20 L744.40 75.39 Z" fill="#2a2a2c"/>
<circle cx="762.9" cy="68.3" r="1.7" fill="none" stroke="#7a7a7a" stroke-width="0.8"/><path d="M764.1 69.6 L766 72.6" stroke="#7a7a7a" stroke-width="0.9"/>
<path d="M767.00 70.07 L772.00 70.07 L772.00 69.50 L773.60 69.50 L773.60 70.07 L777.00 70.07 L777.00 79.00 L767.00 79.00 Z" fill="url(#gL)"/><path d="M767.60 77.10 L772.80 73.11 V77.10 Z" fill="#1c1c1e"/><path d="M767.40 73.68 H769.00 L768.20 75.39 Z" fill="#2a2a2c"/>
<path d="M786.8 65 V81" stroke="#1a1a1c" stroke-width="1.2"/><path d="M787.8 65 V81" stroke="#2c2c2e" stroke-width="0.6"/>
<path d="M796,79 Q796.5,72.5 801,71.2 L807.2,71 Q809.4,71.4 809.8,74 V79 Z" fill="url(#gD)"/><path d="M799.4,70.6 Q801,67.9 805.4,67.9 H807.2 Q809,68 809.2,70.4" stroke="#858585" stroke-width="1.5" fill="none"/><path d="M796.4 75 H809.8" stroke="#2e2e2e" stroke-width="0.7"/>
<path d="M819.4 65 V81" stroke="#1a1a1c" stroke-width="1.2"/><path d="M820.4 65 V81" stroke="#2c2c2e" stroke-width="0.6"/>
<path d="M826.8 66.4 L826.8 73.0 L828.5 71.5 L831.3 71.30000000000001 Z" fill="#9c9c9c"/>
<path d="M835.88 70.10 L837.27 69.90 Q838.20 71.52 839.13 69.90 L840.52 70.10 L844.00 72.93 L842.14 74.95 L841.22 74.14 L841.22 80.00 L835.18 80.00 L835.18 74.14 L834.26 74.95 L832.40 72.93 Z" fill="url(#gM)"/><path d="M836.2,70.2 Q838.2,72.6 840.2,70.2" stroke="#e6e6e6" stroke-width="1" fill="none"/>
<path d="M853.9 65 V81" stroke="#1a1a1c" stroke-width="1.2"/><path d="M854.9 65 V81" stroke="#2c2c2e" stroke-width="0.6"/>
<path d="M860.6 66.4 L860.6 73.0 L862.3000000000001 71.5 L865.1 71.30000000000001 Z" fill="#9c9c9c"/>
<rect x="866.80" y="70.20" width="1.5" height="1.5" fill="#dcdcdc"/><rect x="866.80" y="71.70" width="1.5" height="1.5" fill="#343434"/><rect x="866.80" y="73.20" width="1.5" height="1.5" fill="#dcdcdc"/><rect x="868.30" y="70.20" width="1.5" height="1.5" fill="#343434"/><rect x="868.30" y="71.70" width="1.5" height="1.5" fill="#dcdcdc"/><rect x="868.30" y="73.20" width="1.5" height="1.5" fill="#343434"/><rect x="869.80" y="70.20" width="1.5" height="1.5" fill="#dcdcdc"/><rect x="869.80" y="71.70" width="1.5" height="1.5" fill="#343434"/><rect x="869.80" y="73.20" width="1.5" height="1.5" fill="#dcdcdc"/>
<path d="M872.8,69.4 Q874.8,68 876.6,69.4 L875.6,77.6 Q873.8,78.6 872,77.4 Z" fill="url(#gH)"/><path d="M866.2,76.6 Q870,80.6 876,79 L875.4,77.4 Q870.5,78.6 867.4,75.6 Z" fill="#c4c4c4"/>
<path d="M884.9 66.4 L884.9 73.0 L886.6 71.5 L889.4 71.30000000000001 Z" fill="#9c9c9c"/>
<path d="M893.89 70.40 L895.25 70.20 Q896.15 71.77 897.05 70.20 L898.41 70.40 L901.80 73.14 L899.99 75.10 L899.09 74.32 L899.09 80.00 L893.21 80.00 L893.21 74.32 L892.31 75.10 L890.50 73.14 Z" fill="url(#gM)"/><rect x="893.60" y="73.60" width="1.7" height="1.7" fill="#dcdcdc"/><rect x="893.60" y="75.30" width="1.7" height="1.7" fill="#343434"/><rect x="893.60" y="77.00" width="1.7" height="1.7" fill="#dcdcdc"/><rect x="895.30" y="73.60" width="1.7" height="1.7" fill="#343434"/><rect x="895.30" y="75.30" width="1.7" height="1.7" fill="#dcdcdc"/><rect x="895.30" y="77.00" width="1.7" height="1.7" fill="#343434"/><rect x="897.00" y="73.60" width="1.7" height="1.7" fill="#dcdcdc"/><rect x="897.00" y="75.30" width="1.7" height="1.7" fill="#343434"/><rect x="897.00" y="77.00" width="1.7" height="1.7" fill="#dcdcdc"/>
<path d="M915.06 67.65 L917.00 67.40 Q918.30 69.42 919.60 67.40 L921.54 67.65 L926.40 71.18 L923.81 73.70 L922.51 72.69 L922.51 80.00 L914.09 80.00 L914.09 72.69 L912.79 73.70 L910.20 71.18 Z" fill="url(#gM)"/><rect x="914.90" y="72.20" width="2.25" height="2.25" fill="#dcdcdc"/><rect x="914.90" y="74.45" width="2.25" height="2.25" fill="#343434"/><rect x="914.90" y="76.70" width="2.25" height="2.25" fill="#dcdcdc"/><rect x="917.15" y="72.20" width="2.25" height="2.25" fill="#343434"/><rect x="917.15" y="74.45" width="2.25" height="2.25" fill="#dcdcdc"/><rect x="917.15" y="76.70" width="2.25" height="2.25" fill="#343434"/><rect x="919.40" y="72.20" width="2.25" height="2.25" fill="#dcdcdc"/><rect x="919.40" y="74.45" width="2.25" height="2.25" fill="#343434"/><rect x="919.40" y="76.70" width="2.25" height="2.25" fill="#dcdcdc"/>
<rect x="933.8" y="64.6" width="19.3" height="16.5" fill="#1b1b1d"/>
<path d="M936.3 68.6 Q939.3 65.19999999999999 942.3 68.6 Q939.3 71.8 936.3 68.6 Z" fill="#cfcfcf"/><circle cx="939.3" cy="68.5" r="1.25" fill="#1c1c1e"/>
<circle cx="947.2" cy="73.10000000000001" r="1.45" fill="#f1c21e"/>
<circle cx="944.7" cy="75.7" r="1.45" fill="#f1c21e"/>
<circle cx="949.7" cy="75.7" r="1.45" fill="#f1c21e"/>
<circle cx="947.2" cy="78.3" r="1.45" fill="#f1c21e"/>
<circle cx="947.2" cy="75.7" r="0.9" fill="#3a2a00"/>
<path d="M960.9 65 V81" stroke="#1a1a1c" stroke-width="1.2"/><path d="M961.9 65 V81" stroke="#2c2c2e" stroke-width="0.6"/>
<path d="M967.6 66.5 L967.6 73.1 L969.3000000000001 71.6 L972.1 71.4 Z" fill="#9c9c9c"/>
<path d="M973.9,78.2 L983.8,68.8" stroke="#f0f0f0" stroke-width="1.7" stroke-dasharray="2.2 1.1"/>
<path d="M993.7,70.5 H1009" stroke="#e4e4e4" stroke-width="1.5" stroke-dasharray="2.4 1.4"/><path d="M993.7,76 H1009" stroke="#8e8e8e" stroke-width="0.8"/><circle cx="993.9" cy="76" r="0.9" fill="#b0b0b0"/><circle cx="1008.8" cy="76" r="0.9" fill="#b0b0b0"/>
<path d="M1018.4,71.4 Q1022,66.6 1026,70.8 T1033.8,70.4" stroke="#e4e4e4" stroke-width="1.5" stroke-dasharray="2.2 1.2" fill="none"/><path d="M1018.6,76.4 Q1022.5,73.4 1026,76.6 T1033.6,76.2" stroke="#8e8e8e" stroke-width="0.8" fill="none"/>
<path d="M1043 68.6 Q1045.9 65.19999999999999 1048.8 68.6 Q1045.9 71.8 1043 68.6 Z" fill="#cfcfcf"/><circle cx="1045.9" cy="68.5" r="1.25" fill="#1c1c1e"/>
<path d="M1048,78.2 L1058,68.8" stroke="#f0f0f0" stroke-width="1.7" stroke-dasharray="2.2 1.1"/>
</svg>
<svg style="left:5px;top:4px" width="24" height="24" viewBox="0 0 24 24">
<path d="M0.9 1.1 H4.5 L16.4 21.7 H12.9 L4.1 6.6 V18 H0.9 Z" fill="#f6c71c"/><path d="M22.5 1.1 H18.9 L7 21.7 H10.5 L19.3 6.6 V18 H22.5 Z" fill="#f6c71c"/>
</svg>
<span class="t " style="left:40.5px;top:10.0px;color:#e0a325;font-size:8.6px;">Файл</span>
<span class="t " style="left:74px;top:10.0px;color:#dcdcdc;font-size:8.6px;">Редактирование</span>
<span class="t " style="left:152px;top:10.0px;color:#dcdcdc;font-size:8.6px;">3D одежда</span>
<span class="t " style="left:210.5px;top:10.0px;color:#dcdcdc;font-size:8.6px;">2Д детали</span>
<span class="t " style="left:264.5px;top:10.0px;color:#dcdcdc;font-size:8.6px;">Сшивание</span>
<span class="t " style="left:318px;top:10.0px;color:#dcdcdc;font-size:8.6px;">Материалы</span>
<span class="t " style="left:376px;top:10.0px;color:#dcdcdc;font-size:8.6px;">Аватар</span>
<span class="t " style="left:417.5px;top:10.0px;color:#dcdcdc;font-size:8.6px;">Retopology</span>
<span class="t " style="left:472.5px;top:10.0px;color:#dcdcdc;font-size:8.6px;">Script</span>
<span class="t " style="left:508px;top:10.0px;color:#dcdcdc;font-size:8.6px;">Показывать</span>
<span class="t " style="left:568px;top:10.0px;color:#dcdcdc;font-size:8.6px;">Настройки</span>
<span class="t " style="left:621.5px;top:10.0px;color:#dcdcdc;font-size:8.6px;">Установки</span>
<span class="t " style="left:675.5px;top:10.0px;color:#dcdcdc;font-size:8.6px;">Справка</span>
<span class="t " style="left:973.7px;top:9.5px;color:#4a4a4c;font-size:8.4px;">Hello,</span>
<span class="t " style="left:997px;top:9.5px;color:#e0a325;font-size:8.9px;font-weight:bold;">iND2018</span>
<div style="left:1037px;top:9px;width:1px;height:14px;background:#333335;"></div>
<div style="left:1047px;top:6px;width:21px;height:18px;background:#121214;border-radius:3px;box-shadow:0 0 0 1px #333335;"></div>
<svg style="left:1049px;top:8px" width="17" height="14" viewBox="0 0 17 14">
<path d="M3.6 11.8 a3 3 0 0 1 -.4 -5.9 a4.6 4.6 0 0 1 8.6 -1.6 a3.6 3.6 0 0 1 1.6 7.1 a2 2 0 0 1 -1 .4 z" fill="#f2b81c"/>
<path d="M10.6 4.4 a2.6 2.6 0 1 0 .6 3.6" fill="none" stroke="#121214" stroke-width="1.5"/>
</svg>
<div style="left:1075px;top:9px;width:1px;height:14px;background:#333335;"></div>
<div style="left:1082px;top:11px;width:13.5px;height:13.5px;border-radius:50%;background:#c4c4c4;"></div>
<span class="t " style="left:1085.7px;top:12.0px;color:#252527;font-size:10.5px;font-weight:bold;">?</span>
<svg style="left:1102px;top:10px" width="17" height="15" viewBox="0 0 17 15">
<path d="M4.2 3.6 L6 3 Q7.6 4.6 9.2 3 L11 3.6 L13.2 6 L11.4 7.8 L10.6 7.2 V13.6 H4.6 V7.2 L3.8 7.8 L2 6 Z" fill="#c0c0c0"/>
<path d="M13.4 0.6 V5.4 M11 3 H15.8" stroke="#d8d8d8" stroke-width="1.2"/>
</svg>
<div style="left:1120px;top:5px;width:93px;height:21px;background:#1b1b1d;"></div>
<div style="left:1198px;top:6px;width:1px;height:19px;background:#2c2c2e;"></div>
<svg style="left:1128px;top:10px" width="12" height="12" viewBox="0 0 12 12">
<path d="M1 1.4 L5.6 5 L10.2 1.4 M1 5.8 L5.6 9.4 L10.2 5.8" fill="none" stroke="#f2c21a" stroke-width="1.7"/>
</svg>
<span class="t " style="left:1144px;top:9.8px;color:#f4f4f4;font-size:6.7px;font-weight:bold;">SIMULATION</span>
<svg style="left:1202px;top:13px" width="8" height="6"><path d="M1 1 H7 L4 4.6 Z" fill="#e0e0e0"/></svg>
<div style="left:1224px;top:12px;width:11px;height:10px;background:#232325;box-shadow:0 0 0 1px #343436;"></div>
<div style="left:1239px;top:12px;width:11px;height:10px;background:#232325;box-shadow:0 0 0 1px #343436;"></div>
<div style="left:1254px;top:12px;width:11px;height:10px;background:#232325;box-shadow:0 0 0 1px #343436;"></div>
<div style="left:1227.5px;top:17px;width:4.5px;height:1px;background:#8a8a8a;"></div>
<svg style="left:1240px;top:13px" width="10" height="9" viewBox="0 0 10 9"><path d="M3 1.5 H8 V4.5 H3 Z M1.5 3.8 H6 V7 H1.5 Z" fill="#232325" stroke="#9a9a9a" stroke-width="0.9"/></svg>
<svg style="left:1256px;top:14px" width="8" height="7" viewBox="0 0 8 7"><path d="M1.5 1 L6.2 5.6 M6.2 1 L1.5 5.6" stroke="#7a7a7a" stroke-width="1"/></svg>
<div style="left:28px;top:21px;width:134px;height:263px;background:#1a1a1c;box-shadow:1px 1px 3px rgba(0,0,0,.55);"></div>
<div style="left:29px;top:43px;width:128px;height:18.5px;background:#000;"></div>
<span class="t " style="left:42.7px;top:27.299999999999997px;color:#e4e4e4;font-size:8.6px;">Новый проект</span>
<span class="t " style="left:117.5px;top:27.299999999999997px;color:#e4e4e4;font-size:8.4px;">Ctrl+N</span>
<span class="t " style="left:42.7px;top:46.3px;color:#e0a325;font-size:8.6px;">Открыть</span>
<svg style="left:151px;top:47.8px" width="5" height="8"><path d="M0.3 0.3 L4.2 3.7 L0.3 7.2 Z" fill="#f2b01e"/></svg>
<span class="t " style="left:42.7px;top:65.6px;color:#e4e4e4;font-size:8.6px;">Добавить</span>
<svg style="left:151px;top:67.1px" width="5" height="8"><path d="M0.3 0.3 L4.2 3.7 L0.3 7.2 Z" fill="#ececec"/></svg>
<span class="t " style="left:42.7px;top:85.0px;color:#e4e4e4;font-size:8.6px;">Save Project</span>
<span class="t " style="left:117.5px;top:85.0px;color:#e4e4e4;font-size:8.4px;">Ctrl+S</span>
<span class="t " style="left:42.7px;top:104.5px;color:#e4e4e4;font-size:8.6px;">Сохранить как</span>
<svg style="left:151px;top:106.0px" width="5" height="8"><path d="M0.3 0.3 L4.2 3.7 L0.3 7.2 Z" fill="#ececec"/></svg>
<span class="t " style="left:42.7px;top:125.0px;color:#e4e4e4;font-size:8.15px;">Share via CLOSET</span>
<svg style="left:151px;top:126.49999999999999px" width="5" height="8"><path d="M0.3 0.3 L4.2 3.7 L0.3 7.2 Z" fill="#ececec"/></svg>
<span class="t " style="left:42.7px;top:145.5px;color:#e4e4e4;font-size:8.6px;">Импорт</span>
<svg style="left:151px;top:147.0px" width="5" height="8"><path d="M0.3 0.3 L4.2 3.7 L0.3 7.2 Z" fill="#ececec"/></svg>
<span class="t " style="left:42.7px;top:164.9px;color:#e4e4e4;font-size:8.6px;">Импорт (добавить)</span>
<svg style="left:151px;top:166.4px" width="5" height="8"><path d="M0.3 0.3 L4.2 3.7 L0.3 7.2 Z" fill="#ececec"/></svg>
<span class="t " style="left:42.7px;top:184.3px;color:#e4e4e4;font-size:8.6px;">Экспорт</span>
<svg style="left:151px;top:185.8px" width="5" height="8"><path d="M0.3 0.3 L4.2 3.7 L0.3 7.2 Z" fill="#ececec"/></svg>
<span class="t " style="left:42.7px;top:205.0px;color:#e4e4e4;font-size:8.6px;">Снимок (скриншот)</span>
<svg style="left:151px;top:206.5px" width="5" height="8"><path d="M0.3 0.3 L4.2 3.7 L0.3 7.2 Z" fill="#ececec"/></svg>
<span class="t " style="left:42.7px;top:225.5px;color:#e4e4e4;font-size:8.6px;">Recent</span>
<svg style="left:151px;top:227.0px" width="5" height="8"><path d="M0.3 0.3 L4.2 3.7 L0.3 7.2 Z" fill="#ececec"/></svg>
<span class="t " style="left:42.7px;top:246.0px;color:#e4e4e4;font-size:8.6px;">Information</span>
<svg style="left:151px;top:247.5px" width="5" height="8"><path d="M0.3 0.3 L4.2 3.7 L0.3 7.2 Z" fill="#ececec"/></svg>
<span class="t " style="left:42.7px;top:266.8px;color:#e4e4e4;font-size:8.6px;">Выход</span>
<div style="left:43px;top:120.5px;width:109px;height:1px;background:#2a2a2c;"></div>
<div style="left:43px;top:141px;width:109px;height:1px;background:#2a2a2c;"></div>
<div style="left:43px;top:200.2px;width:109px;height:1px;background:#2a2a2c;"></div>
<div style="left:43px;top:220.8px;width:109px;height:1px;background:#2a2a2c;"></div>
<div style="left:43px;top:241.6px;width:109px;height:1px;background:#2a2a2c;"></div>
<div style="left:43px;top:262px;width:109px;height:1px;background:#2a2a2c;"></div>
<div style="left:162px;top:41.5px;width:194px;height:222.5px;background:#1a1a1c;box-shadow:1px 1px 3px rgba(0,0,0,.55);"></div>
<span class="t " style="left:172.7px;top:48.099999999999994px;color:#e4e4e4;font-size:8.6px;">Проект</span>
<span class="t " style="left:289.5px;top:48.099999999999994px;color:#e4e4e4;font-size:8.6px;">Ctrl+O</span>
<span class="t " style="left:172.7px;top:69.3px;color:#e4e4e4;font-size:8.6px;">Одежда</span>
<span class="t " style="left:172.7px;top:87.89999999999999px;color:#e4e4e4;font-size:8.6px;">Trim</span>
<span class="t " style="left:172.7px;top:108.0px;color:#e4e4e4;font-size:8.6px;">Аватар</span>
<span class="t " style="left:289.5px;top:108.0px;color:#e4e4e4;font-size:8.6px;">Ctrl+Shift+A</span>
<span class="t " style="left:172.7px;top:127.30000000000001px;color:#e4e4e4;font-size:8.6px;">Hair/Shoes</span>
<span class="t " style="left:172.7px;top:146.5px;color:#e4e4e4;font-size:8.6px;">Поза</span>
<span class="t " style="left:289.5px;top:146.5px;color:#e4e4e4;font-size:8.6px;">Ctrl+Shift+P</span>
<span class="t " style="left:172.7px;top:165.8px;color:#e4e4e4;font-size:8.6px;">Движение суставов (моушен)</span>
<span class="t " style="left:172.7px;top:186.3px;color:#e4e4e4;font-size:8.6px;">Modular</span>
<span class="t " style="left:172.7px;top:207.0px;color:#e4e4e4;font-size:8.6px;">Camera Projection</span>
<span class="t " style="left:172.7px;top:226.3px;color:#e4e4e4;font-size:8.6px;">Camera Transformation</span>
<span class="t " style="left:172.7px;top:247.0px;color:#e4e4e4;font-size:8.6px;">User Setting</span>
<div style="left:173px;top:65px;width:174px;height:1px;background:#2a2a2c;"></div>
<div style="left:173px;top:182px;width:174px;height:1px;background:#2a2a2c;"></div>
<div style="left:173px;top:202.3px;width:174px;height:1px;background:#2a2a2c;"></div>
<div style="left:173px;top:242px;width:174px;height:1px;background:#2a2a2c;"></div>
</div></body></html>
